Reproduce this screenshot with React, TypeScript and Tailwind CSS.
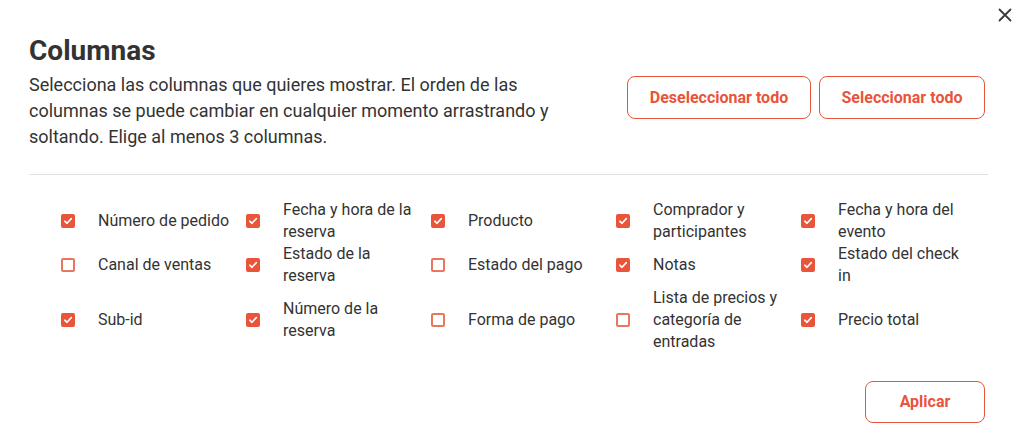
import React from "react";

type Item = { label: string; checked: boolean };

const items: Item[] = [
  { label: "Número de pedido", checked: true },
  { label: "Fecha y hora de la reserva", checked: true },
  { label: "Producto", checked: true },
  { label: "Comprador y participantes", checked: true },
  { label: "Fecha y hora del evento", checked: true },
  { label: "Canal de ventas", checked: false },
  { label: "Estado de la reserva", checked: true },
  { label: "Estado del pago", checked: false },
  { label: "Notas", checked: true },
  { label: "Estado del check in", checked: true },
  { label: "Sub-id", checked: true },
  { label: "Número de la reserva", checked: true },
  { label: "Forma de pago", checked: false },
  { label: "Lista de precios y categoría de entradas", checked: false },
  { label: "Precio total", checked: true },
];

function Box({ checked }: { checked: boolean }) {
  if (checked) {
    return (
      <span className="flex h-[14px] w-[14px] shrink-0 items-center justify-center rounded-[2px] bg-[#e8553a]">
        <svg width="10" height="10" viewBox="0 0 10 10" fill="none">
          <path d="M1.8 5.2 L4 7.3 L8.3 2.6" stroke="white" strokeWidth="1.6" strokeLinecap="round" strokeLinejoin="round" />
        </svg>
      </span>
    );
  }
  return <span className="h-[14px] w-[14px] shrink-0 rounded-[2px] border-2 border-[#e8775f] bg-white" />;
}

export default function App() {
  return (
    <div className="relative h-[441px] w-[1022px] overflow-hidden bg-white text-[#333333]" style={{ fontFamily: "Roboto, 'Liberation Sans', sans-serif" }}>
      <button className="absolute right-[9px] top-[7px] flex h-[16px] w-[16px] items-center justify-center">
        <svg width="14" height="14" viewBox="0 0 14 14" fill="none">
          <path d="M1.5 1.5 L12.5 12.5 M12.5 1.5 L1.5 12.5" stroke="#3a3a3a" strokeWidth="1.8" strokeLinecap="round" />
        </svg>
      </button>
      <div className="px-[29px] pt-[34px]">
        <h1 className="text-[28px] font-bold leading-[34px] text-[#333333]">Columnas</h1>
        <div className="mt-[4px] flex items-start justify-between">
          <p className="w-[560px] text-[18px] leading-[26px] text-[#333333]">
            Selecciona las columnas que quieres mostrar. El orden de las columnas se puede cambiar en cualquier momento arrastrando y soltando. Elige al menos 3 columnas.
          </p>
          <div className="mr-[8px] mt-[4px] flex gap-[8px]">
            <button className="h-[43px] w-[184px] rounded-[8px] border border-[#e8553a] text-[16px] font-bold text-[#e8553a]">
              Deseleccionar todo
            </button>
            <button className="h-[43px] w-[166px] rounded-[8px] border border-[#e8553a] text-[16px] font-bold text-[#e8553a]">
              Seleccionar todo
            </button>
          </div>
        </div>
        <div className="mr-[5px] mt-[24px] h-px bg-[#e2e2e2]" />
        <div className="ml-[32px] mt-[24px] grid grid-cols-[repeat(5,185px)]">
          {items.map((it) => (
            <div key={it.label} className="flex items-center">
              <Box checked={it.checked} />
              <span className="ml-[23px] w-[132px] text-[16px] leading-[22px] text-[#333333]">{it.label}</span>
            </div>
          ))}
        </div>
        <div className="mr-[8px] mt-[28px] flex justify-end">
          <button className="h-[42px] w-[120px] rounded-[8px] border border-[#e8553a] text-[16px] font-bold text-[#e8553a]">
            Aplicar
          </button>
        </div>
      </div>
    </div>
  );
}
